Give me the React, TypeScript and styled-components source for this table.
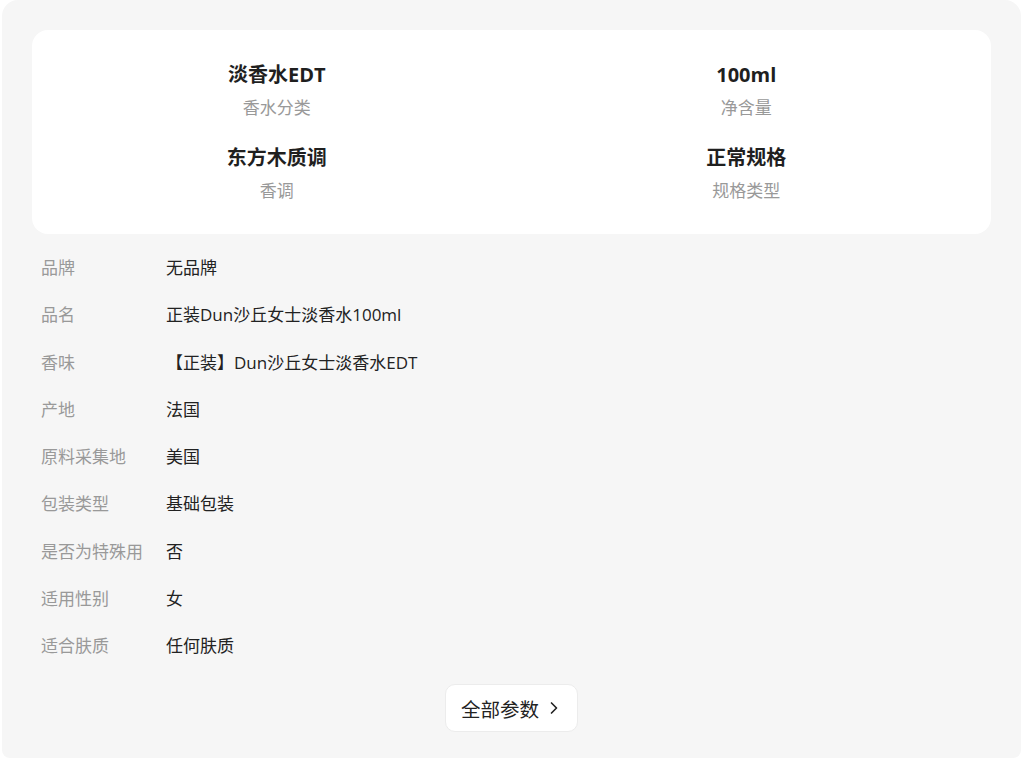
import React from "react";
import styled, { createGlobalStyle } from "styled-components";
import { ChevronRight } from "lucide-react";

const Global = createGlobalStyle`
  html, body { margin: 0; padding: 0; background: #ffffff; }
  body { font-family: "Open Sans", "Noto Sans CJK SC", sans-serif; }
  * { box-sizing: border-box; }
`;

const Panel = styled.div`
  margin-left: 2px;
  width: 1019px;
  height: 758px;
  background: #f6f6f6;
  border-radius: 16px 16px 8px 8px;
  padding: 30px 30px 0 30px;
  display: flex;
  flex-direction: column;
`;

const Card = styled.div`
  background: #ffffff;
  border-radius: 16px;
  padding: 31px 10px 31px;
  display: grid;
  grid-template-columns: 1fr 1fr;
  row-gap: 24px;
`;

const Stat = styled.div`
  display: flex;
  flex-direction: column;
  align-items: center;
  gap: 7px;
`;

const StatValue = styled.div`
  font-size: 20px;
  line-height: 28px;
  font-weight: 700;
  color: #1f1f1f;
`;

const StatLabel = styled.div`
  font-size: 17px;
  line-height: 24px;
  color: #999999;
`;

const List = styled.div`
  display: flex;
  flex-direction: column;
  padding: 9px 0 0 9px;
`;

const Row = styled.div`
  display: flex;
  align-items: center;
  height: 47.25px;
  font-size: 17px;
`;

const Key = styled.div`
  width: 125px;
  flex-shrink: 0;
  color: #999999;
  white-space: nowrap;
`;

const Val = styled.div`
  color: #222222;
  white-space: nowrap;
`;

const Footer = styled.div`
  display: flex;
  justify-content: center;
  padding-top: 16px;
`;

const MoreButton = styled.button`
  display: flex;
  align-items: center;
  gap: 5px;
  height: 48px;
  width: 133px;
  padding: 0 0 0 15px;
  border: 1px solid #ececec;
  border-radius: 10px;
  background: #ffffff;
  font-family: inherit;
  font-size: 19.5px;
  color: #222222;
  cursor: pointer;
`;

const stats = [
  { value: "淡香水EDT", label: "香水分类" },
  { value: "100ml", label: "净含量" },
  { value: "东方木质调", label: "香调" },
  { value: "正常规格", label: "规格类型" },
];

const params = [
  ["品牌", "无品牌"],
  ["品名", "正装Dun沙丘女士淡香水100ml"],
  ["香味", "【正装】Dun沙丘女士淡香水EDT"],
  ["产地", "法国"],
  ["原料采集地", "美国"],
  ["包装类型", "基础包装"],
  ["是否为特殊用", "否"],
  ["适用性别", "女"],
  ["适合肤质", "任何肤质"],
];

export default function App() {
  return (
    <>
      <Global />
      <Panel>
        <Card>
          {stats.map((s) => (
            <Stat key={s.label}>
              <StatValue>{s.value}</StatValue>
              <StatLabel>{s.label}</StatLabel>
            </Stat>
          ))}
        </Card>
        <List>
          {params.map(([k, v]) => (
            <Row key={k}>
              <Key>{k}</Key>
              <Val>{v}</Val>
            </Row>
          ))}
        </List>
        <Footer>
          <MoreButton>
            全部参数
            <ChevronRight size={20} strokeWidth={2} />
          </MoreButton>
        </Footer>
      </Panel>
    </>
  );
}
